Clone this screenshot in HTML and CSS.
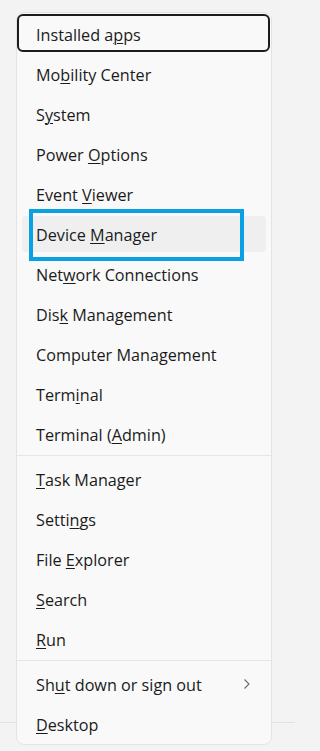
FILE: index.html
```html
<!DOCTYPE html>
<html>
<head>
<meta charset="utf-8">
<link rel="stylesheet" href="styles.css">
</head>
<body>
<div class="desktop">
  <div class="menu">
    <div class="item focused"><span>Installed a<u>p</u>ps</span></div>
    <div class="item"><span>Mo<u>b</u>ility Center</span></div>
    <div class="item"><span>S<u>y</u>stem</span></div>
    <div class="item"><span>Power <u>O</u>ptions</span></div>
    <div class="item"><span>Event <u>V</u>iewer</span></div>
    <div class="item hover"><span>Device <u>M</u>anager</span></div>
    <div class="item"><span>Net<u>w</u>ork Connections</span></div>
    <div class="item"><span>Dis<u>k</u> Management</span></div>
    <div class="item"><span>Computer Mana<u>g</u>ement</span></div>
    <div class="item"><span>Term<u>i</u>nal</span></div>
    <div class="item"><span>Terminal (<u>A</u>dmin)</span></div>
    <div class="sep"></div>
    <div class="item"><span><u>T</u>ask Manager</span></div>
    <div class="item"><span>Setti<u>n</u>gs</span></div>
    <div class="item"><span>File <u>E</u>xplorer</span></div>
    <div class="item"><span><u>S</u>earch</span></div>
    <div class="item"><span><u>R</u>un</span></div>
    <div class="sep"></div>
    <div class="item sub"><span>Sh<u>u</u>t down or sign out</span>
      <svg class="chev" width="8" height="12" viewBox="0 0 8 12"><polyline points="1.5,1.5 6,6 1.5,10.5" fill="none" stroke="#6b6b6b" stroke-width="1.1"/></svg>
    </div>
    <div class="item"><span><u>D</u>esktop</span></div>
  </div>
  <div class="callout"></div>
</div>
<div class="taskbar"></div>
</body>
</html>
```
FILE: styles.css
```css
html, body {
  margin: 0;
  padding: 0;
}
body {
  background: #f3f3f3;
  width: 295px;
  height: 751px;
  overflow: hidden;
  font-family: "Open Sans", "Noto Sans", sans-serif;
  color: #1b1b1b;
}
.desktop {
  position: relative;
  height: 722px;
}
.taskbar {
  border-top: 1px solid #e2e2e2;
  height: 28px;
  background: #f3f3f3;
}
.menu {
  position: absolute;
  top: 12px;
  left: 16px;
  width: 254px;
  display: flex;
  flex-direction: column;
  background: #f9f9f9;
  border: 1px solid #e4e4e4;
  border-radius: 8px;
  padding: 1px 0 0;
  z-index: 2;
}
.item {
  position: relative;
  height: 36px;
  margin: 2px 5px;
  padding: 1px 15px 0 14px;
  box-sizing: border-box;
  border-radius: 4px;
  display: flex;
  align-items: center;
  font-size: 16.2px;
  white-space: nowrap;
}
.item u {
  text-decoration-thickness: 1px;
  text-underline-offset: 2px;
}
.item.hover {
  background: #efefef;
}
.item.focused::after {
  content: "";
  position: absolute;
  top: -2px;
  bottom: 0;
  left: -5px;
  right: -4px;
  border: 2px solid #1c1c1c;
  border-radius: 6px;
}
.item.sub {
  justify-content: space-between;
}
.chev {
  display: block;
  margin-top: -2px;
}
.sep {
  height: 1px;
  background: #e6e6e6;
  margin: 1px 0 3px;
}
.callout {
  position: absolute;
  left: 29px;
  top: 209px;
  width: 207px;
  height: 44px;
  border: 4px solid #0aa1e2;
  z-index: 3;
}
```
